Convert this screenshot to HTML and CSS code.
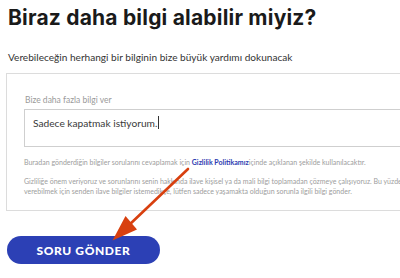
FILE: index.html
```html
<!DOCTYPE html>
<html lang="tr">
<head>
<meta charset="utf-8">
<link rel="stylesheet" href="styles.css">
</head>
<body>
<main class="page">
  <h1 class="title">Biraz daha bilgi alabilir miyiz?</h1>
  <p class="lead">Verebileceğin herhangi bir bilginin bize büyük yardımı dokunacak</p>
  <section class="card">
    <label class="label">Bize daha fazla bilgi ver</label>
    <div class="field"><span class="value">Sadece kapatmak istiyorum.</span><span class="caret"></span></div>
    <p class="note">Buradan gönderdiğin bilgiler sorularını cevaplamak için <a class="link">Gizlilik Politikamız</a>içinde açıklanan şekilde kullanılacaktır.</p>
    <p class="note note-two">Gizliliğe önem veriyoruz ve sorunlarını senin hakkında ilave kişisel ya da mali bilgi toplamadan çözmeye çalışıyoruz. Bu yüzden iyi bir yanıt<br>verebilmek için senden ilave bilgiler istemedikçe, lütfen sadece yaşamakta olduğun sorunla ilgili bilgi gönder.</p>
  </section>
  <button class="submit">SORU GÖNDER</button>
</main>
<svg class="arrow" width="400" height="278" viewBox="0 0 400 278">
  <line x1="188" y1="169" x2="128" y2="226" stroke="#d8400f" stroke-width="2.6" stroke-linecap="round"/>
  <polygon points="112.5,240.5 125.5,216 137,229.5" fill="#d8400f"/>
</svg>
</body>
</html>
```
FILE: styles.css
```css
html, body {
  margin: 0;
  padding: 0;
  overflow: hidden;
  background: #fff;
}
body {
  position: relative;
  width: 400px;
  height: 278px;
  font-family: "Lato", "Liberation Sans", sans-serif;
  color: #222;
}
.page {
  padding: 4px 0 0 8px;
  width: 600px;
}
.title {
  margin: 0;
  font-family: "Inter", "Lato", sans-serif;
  font-size: 21px;
  line-height: 28px;
  font-weight: 700;
  color: #1a1a1a;
  letter-spacing: 0.2px;
}
.lead {
  margin: 18px 0 0 0;
  font-size: 10.1px;
  line-height: 14px;
  color: #333;
}
.card {
  margin: 9px 0 0 -2px;
  width: 560px;
  border: 1px solid #dcdcdc;
  padding: 20px 18px 14px 17px;
  display: flex;
  flex-direction: column;
}
.label {
  padding-left: 1px;
  font-size: 8.5px;
  line-height: 12px;
  color: #9a9a9a;
}
.field {
  margin-top: 3px;
  border: 1px solid #cfcfcf;
  padding: 6px 8px;
  box-sizing: border-box;
  height: 38px;
  font-size: 10.2px;
  line-height: 14px;
  color: #3a3a3a;
  display: flex;
  align-items: flex-start;
}
.caret {
  display: inline-block;
  width: 1px;
  height: 13px;
  background: #333;
  margin-left: 1px;
}
.note {
  margin: 10px 0 0 0;
  font-size: 7px;
  line-height: 10px;
  color: #9d9d9d;
}
.note-two {
  margin-top: 9px;
}
.link {
  color: #2b3ab0;
  font-weight: 700;
}
.submit {
  margin: 25px 0 0 -1px;
  width: 153px;
  height: 28px;
  border: none;
  border-radius: 14px;
  background: #2c40b5;
  color: #fff;
  font-family: "Lato", "Liberation Sans", sans-serif;
  font-weight: 900;
  font-size: 12px;
  letter-spacing: 0.6px;
  padding: 0;
}
.arrow {
  position: absolute;
  left: 0;
  top: 0;
  pointer-events: none;
}
```
